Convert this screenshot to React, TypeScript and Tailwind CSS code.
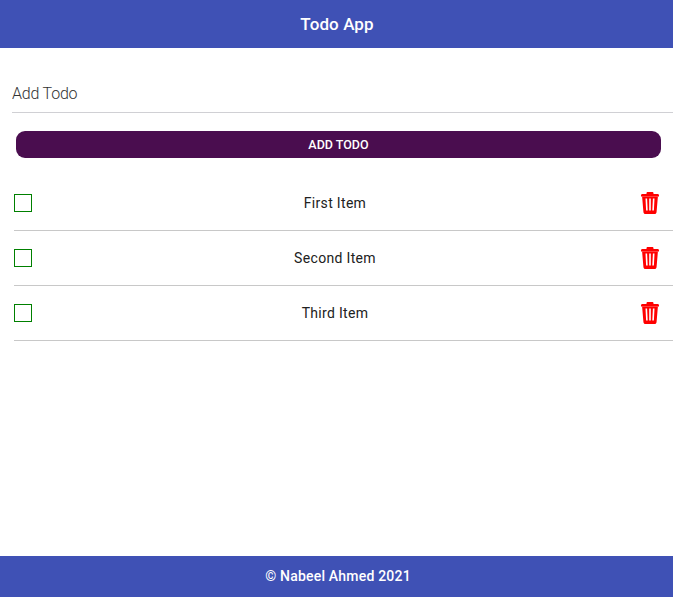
import React from "react";

const items = ["First Item", "Second Item", "Third Item"];

function Trash() {
  return (
    <svg width="18" height="22" viewBox="0 0 18 22" fill="#ff0000">
      <path d="M5.500 2V1.400C5.500.5 6 0 6.900 0h4.200c.9 0 1.400.5 1.400 1.400V2h4.100c.8 0 1.400.6 1.400 1.400V4.600H0V3.400C0 2.600.6 2 1.400 2z" />
      <path fillRule="evenodd" d="M1.100 4.500h15.800L15.600 19.700c-.1 1.500-.8 2.300-2.300 2.300H4.700c-1.500 0-2.200-.8-2.300-2.300zM4.500 6.500l.6 12h1.600l-.6-12zm3.700 0v12h1.600v-12zm3.700 0-.6 12h1.600l.6-12z" />
    </svg>
  );
}

export default function App() {
  return (
    <div className="flex h-[597px] flex-col bg-white font-['Roboto',sans-serif]">
      <header className="flex h-12 items-center justify-center bg-[#3f51b5] pt-px pl-px text-[17px] font-medium tracking-[0.1px] text-white">Todo App</header>
      <main className="flex-1 overflow-hidden pt-[27px]">
        <input aria-label="Add Todo" placeholder="Add Todo" className="ml-3 h-[38px] w-[661px] border-b border-[#d0d0d4] text-base font-light tracking-[-0.2px] outline-none placeholder:text-[#333]" />
        <button className="mx-4 mt-[18px] flex h-[27px] w-[645px] items-center justify-center rounded-[9px] bg-[#4a0d4f] pt-[2px] text-[12.5px] font-medium text-white">ADD TODO</button>
        <ul className="mt-[18px] ml-[14px]">
          {items.map((item) => (
            <li key={item} className="flex h-[55px] items-center border-b border-[#c8c8c8] pr-[14px]">
              <span className="size-[18px] border border-[#008000]" />
              <span className="flex-1 pr-[3px] text-center text-sm tracking-[0.32px] text-[#212121]">{item}</span>
              <Trash />
            </li>
          ))}
        </ul>
      </main>
      <footer className="flex h-[41px] items-center justify-center bg-[#3f51b5] pb-px pl-[3px] text-sm font-medium tracking-[0.2px] text-white">© Nabeel Ahmed 2021</footer>
    </div>
  );
}
